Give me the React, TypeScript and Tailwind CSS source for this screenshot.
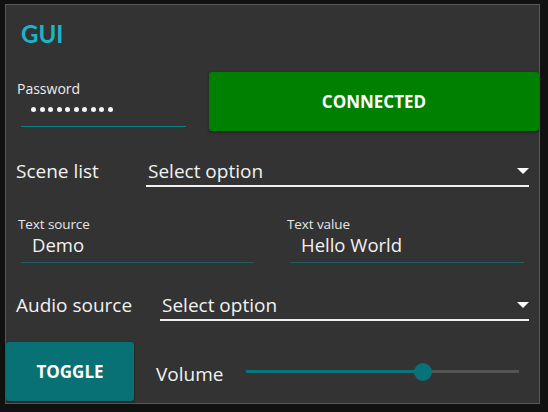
import React from "react";

const font = { fontFamily: "'Open Sans', Lato, sans-serif" };

const Caret = () => (
  <svg width="12" height="7" viewBox="0 0 12 7" className="shrink-0">
    <path d="M0 0 H12 L6 6 Z" fill="#ffffff" />
  </svg>
);

const SelectRow = ({ label, selectLeft }: { label: string; selectLeft: string }) => (
  <div className="flex items-end h-[32px] pr-[10px]">
    <div className={`text-[19px] leading-[24px] text-[#f2f2f2] pl-[10px] ${selectLeft} shrink-0 pb-[4px]`}>{label}</div>
    <div className="flex-1 flex items-center justify-between border-b-2 border-[#f0f0f0] h-[30px] pl-[2px]">
      <span className="text-[19px] leading-[24px] text-[#f2f2f2]">Select option</span>
      <Caret />
    </div>
  </div>
);

const TextField = ({ label, value, width }: { label: string; value: string; width: string }) => (
  <div className={`flex flex-col ${width}`}>
    <div className="text-[13.5px] leading-[14px] text-[#e6e6e6] tracking-[-0.1px]">{label}</div>
    <div className="text-[18.5px] leading-[22px] text-[#f2f2f2] pl-[14px] mt-[3px]">{value}</div>
    <div className="mt-[6px] ml-[3px] h-[1px] bg-[#1e5f63]" />
  </div>
);

export default function App() {
  return (
    <div className="w-[548px] h-[412px] bg-[#111111] pt-[4px] pl-[5px]" style={font}>
      <div className="w-[535px] h-[400px] bg-[#333333] border border-[#585858] flex flex-col">
        {/* header */}
        <div className="h-[67px] pl-[15px] pt-[13px]">
          <div className="text-[24px] leading-[32px] font-bold text-[#1cb5c6]" style={{ fontFamily: "Lato, sans-serif" }}>GUI</div>
        </div>

        {/* password + connect */}
        <div className="flex h-[59px]">
          <div className="w-[203px] flex flex-col pl-[11px] pt-[9px]">
            <div className="text-[14px] leading-[16px] text-[#eeeeee]">Password</div>
            <div className="flex gap-[3.5px] pl-[14px] mt-[10px]">
              {Array.from({ length: 10 }).map((_, i) => (
                <span key={i} className="w-[5px] h-[5px] rounded-full bg-[#f4f4f4]" />
              ))}
            </div>
            <div className="mt-[14px] ml-[4px] w-[165px] h-[1px] bg-[#0a8088]" />
          </div>
          <button className="flex-1 h-[59px] rounded-[3px] bg-[#008000] text-white text-[17px] font-bold shadow-[0_1px_3px_rgba(0,0,0,0.5)]">
            CONNECTED
          </button>
        </div>

        {/* scene list */}
        <div className="mt-[24px]">
          <SelectRow label="Scene list" selectLeft="w-[140px]" />
        </div>

        {/* text fields */}
        <div className="flex mt-[30px] pl-[12px]">
          <TextField label="Text source" value="Demo" width="w-[236px]" />
          <div className="w-[33px]" />
          <TextField label="Text value" value="Hello World" width="w-[237px]" />
        </div>

        {/* audio source */}
        <div className="mt-[26px]">
          <SelectRow label="Audio source" selectLeft="w-[154px]" />
        </div>

        {/* toggle + volume */}
        <div className="flex items-center mt-[21px] h-[59px]">
          <button className="w-[128px] h-[59px] rounded-[3px] bg-[#077175] text-white text-[17px] font-bold shadow-[0_1px_3px_rgba(0,0,0,0.4)]">
            TOGGLE
          </button>
          <div className="text-[19px] leading-[24px] text-[#f2f2f2] ml-[22px] w-[90px] pt-[4px]">Volume</div>
          <div className="relative w-[273px] h-[18px] flex items-center">
            <div className="h-[3px] w-[177px] bg-[#08757a]" />
            <div className="h-[3px] flex-1 bg-[#545454]" />
            <div className="absolute left-[168px] top-0 w-[18px] h-[18px] rounded-full bg-[#077378]" />
          </div>
        </div>
      </div>
    </div>
  );
}
